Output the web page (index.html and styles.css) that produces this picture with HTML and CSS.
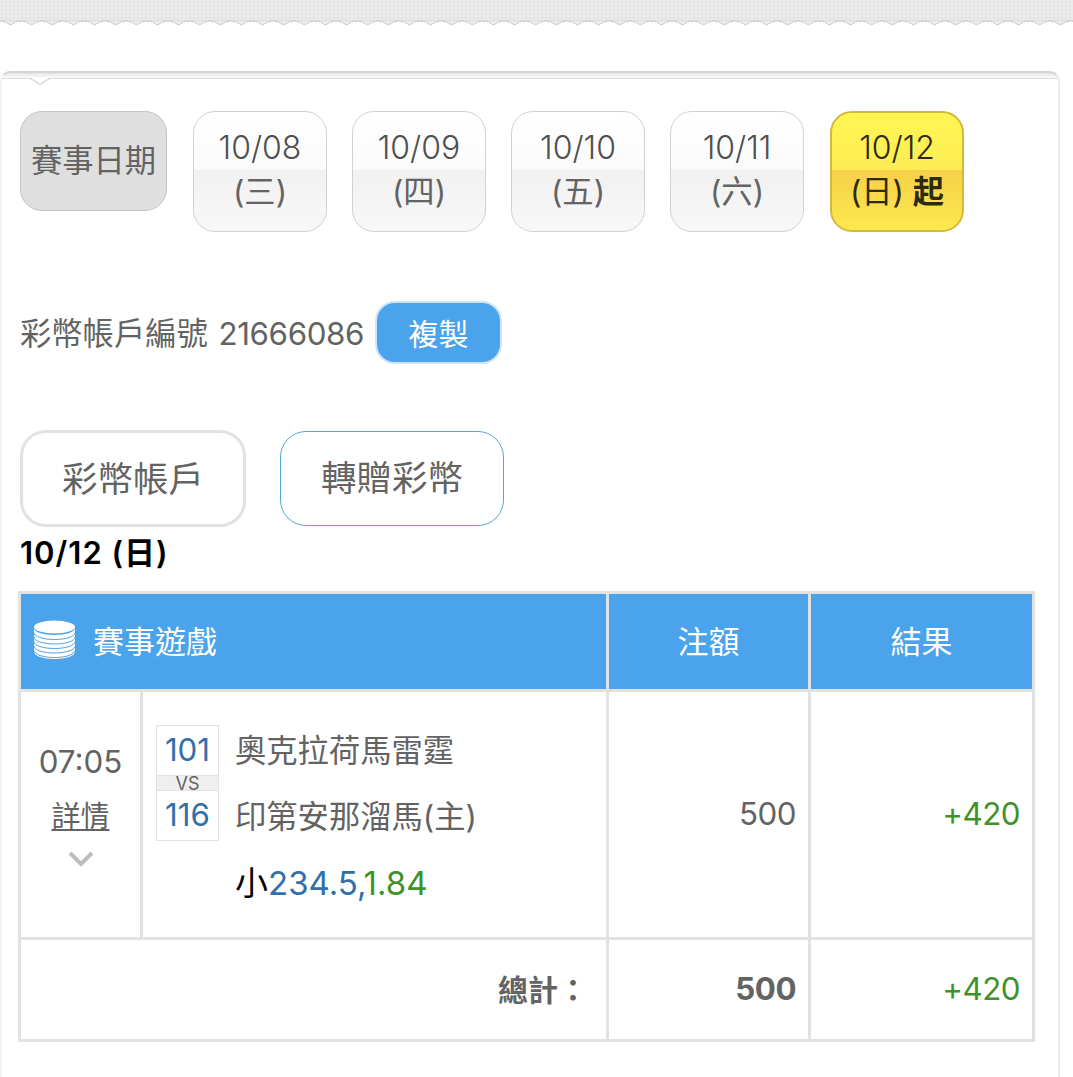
FILE: index.html
```html
<!DOCTYPE html>
<html lang="zh-Hant">
  <head>
    <meta charset="UTF-8" />
    <meta name="viewport" content="width=device-width, initial-scale=1.0" />
    <title>彩幣帳戶</title>
    <link rel="stylesheet" href="styles.css">
  </head>
  <body>
    <div class="top-band">
      <svg class="scallop" width="1073" height="8">
        <defs>
          <pattern id="wave" width="21" height="8" patternUnits="userSpaceOnUse">
            <path d="M0 1 Q5 1 10.5 5 Q16 1 21 1 L21 0 L0 0 Z" fill="#ebebeb" stroke="#cdcdcd" stroke-width="1" />
          </pattern>
        </defs>
        <rect width="1073" height="8" fill="url(#wave)" />
      </svg>
    </div>

    <div class="panel">
      <svg class="panel-notch" width="22" height="9" viewBox="0 0 22 9">
        <path d="M1 0L11 6.500L21 0" fill="#ffffff" stroke="#dddddd" stroke-width="1.5" />
      </svg>

      <div class="date-row">
        <div class="date-label">賽事日期</div>
        <div class="date-btn"><span class="date-num">10/08</span><span>(三)</span></div>
        <div class="date-btn"><span class="date-num">10/09</span><span>(四)</span></div>
        <div class="date-btn"><span class="date-num">10/10</span><span>(五)</span></div>
        <div class="date-btn"><span class="date-num">10/11</span><span>(六)</span></div>
        <div class="date-btn active"><span class="date-num">10/12</span><span>(日) <b>起</b></span></div>
      </div>

      <div class="account-row">
        <span class="account-text">彩幣帳戶編號 <span class="account-no">21666086</span></span>
        <button class="copy-btn">複製</button>
      </div>

      <div class="tabs">
        <div class="tab">彩幣帳戶</div>
        <div class="tab tab-blue">轉贈彩幣</div>
      </div>

      <div class="day-title">10/12 (日)</div>

      <table class="bets">
        <colgroup>
          <col class="col-time" />
          <col class="col-game" />
          <col class="col-stake" />
          <col class="col-result" />
        </colgroup>
        <tr class="head">
          <th colspan="2">
            <div class="head-game">
              <svg class="coins" width="41" height="39" viewBox="0 0 41 39">
                <ellipse cx="20.5" cy="7" rx="20.5" ry="6.5" fill="#fff" />
                <path d="M0 8v24c0 4 9 7 20.500 7s20.500-3 20.500-7V8c0 4-9 7-20.500 7S0 12 0 8z" fill="#fff" />
                <g fill="none" stroke="#4ba3ec" stroke-width="1">
                  <path d="M0 12.500c0 4 9 7 20.500 7s20.500-3 20.500-7" />
                  <path d="M0 17c0 4 9 7 20.500 7s20.500-3 20.500-7" />
                  <path d="M0 21.500c0 4 9 7 20.500 7s20.500-3 20.500-7" />
                  <path d="M0 26c0 4 9 7 20.500 7s20.500-3 20.500-7" />
                  <path d="M0 30.500c0 4 9 7 20.500 7s20.500-3 20.500-7" />
                </g>
              </svg>
              賽事遊戲
            </div>
          </th>
          <th>注額</th>
          <th>結果</th>
        </tr>
        <tr class="bet-row">
          <td class="time-cell">
            <div class="time">07:05</div>
            <a class="detail">詳情</a>
            <svg class="chevron" width="26" height="16" viewBox="0 0 26 16">
              <path d="M2 2l11 11L24 2" fill="none" stroke="#bdbdbd" stroke-width="4" />
            </svg>
          </td>
          <td class="game-cell">
            <div class="game">
              <div class="codes">
                <div>101</div>
                <div class="vs">VS</div>
                <div>116</div>
              </div>
              <div class="teams">
                <div>奧克拉荷馬雷霆</div>
                <div>印第安那溜馬(主)</div>
              </div>
            </div>
            <div class="pick">小<span class="blue">234.5,</span><span class="green">1.84</span></div>
          </td>
          <td class="num">500</td>
          <td class="num green">+420</td>
        </tr>
        <tr class="total-row">
          <td colspan="2" class="total-label">總計：</td>
          <td class="num"><b>500</b></td>
          <td class="num green">+420</td>
        </tr>
      </table>
    </div>
  </body>
</html>
```

FILE: styles.css
```css
* {
  box-sizing: border-box;
}

body {
  margin: 0;
  height: 1077px;
  overflow: hidden;
  background-color: #ffffff;
  color: #636363;
  font-family: Inter, "Noto Sans CJK TC", sans-serif;
  font-size: 31.3px;
}

.top-band {
  height: 24px;
  background-color: #ebebeb;
  background-image: radial-gradient(#e0e0e0 1px, transparent 1px);
  background-size: 4px 4px;
  position: relative;
}

.scallop {
  position: absolute;
  left: 0;
  bottom: -4px;
  display: block;
  background-color: #ffffff;
}

.panel {
  position: relative;
  width: 1060px;
  height: 1030px;
  margin-top: 47px;
  padding: 38px 0 0 20px;
  border-top: 2px solid #d4d4d4;
  border-right: 2px solid #e9e9e9;
  border-left: 2px solid #f2f2f2;
  border-radius: 10px 10px 0 0;
  background:
    linear-gradient(#dddddd, #dddddd) 0 5px / 100% 1px no-repeat,
    linear-gradient(#e6e6e6, #fafafa) 0 0 / 100% 5px no-repeat;
}

.panel-notch {
  position: absolute;
  top: 5px;
  left: 27px;
  display: block;
}

.date-row {
  display: flex;
  align-items: flex-start;
  gap: 25px;
  margin-left: -2px;
}

.date-label {
  width: 147px;
  height: 100px;
  margin-right: 1px;
  line-height: 98px;
  text-align: center;
  background-color: #dfdfdf;
  border: 1px solid #c4c4c4;
  border-radius: 22px;
}

.date-btn {
  display: flex;
  flex-direction: column;
  width: 134px;
  height: 121px;
  overflow: hidden;
  border: 1px solid #d2d2d2;
  border-radius: 22px;
  text-align: center;
  background: linear-gradient(#ffffff, #fbfbfb 49%, #f1f1f1 49%, #f8f8f8);
}

.date-btn span {
  height: 45px;
  line-height: 45px;
}

.date-btn .date-num {
  margin-top: 13px;
  color: #4f4f4f;
  font-size: 32px;
  font-weight: 350;
}

.date-btn.active {
  margin-left: 1px;
  color: #2e2a12;
  border: 2px solid #d2b93c;
  background: linear-gradient(#fff652, #fdec55 49%, #f6d148 49%, #fde84f);
}

.date-btn.active .date-num {
  margin-top: 12px;
  color: #2e2a12;
}

.account-row {
  display: flex;
  align-items: center;
  gap: 11px;
  margin-top: 69px;
  margin-left: -2px;
}

.account-text {
  padding-bottom: 3px;
}

.account-no {
  margin-left: 2px;
  letter-spacing: -0.4px;
}

.copy-btn {
  width: 127px;
  height: 63px;
  padding: 0 0 2px;
  border: 2px solid #cfe5f7;
  border-radius: 20px;
  background-color: #4ba3ec;
  color: #ffffff;
  font: inherit;
  font-size: 30px;
}

.tabs {
  display: flex;
  align-items: flex-start;
  gap: 34px;
  margin-top: 66px;
  margin-left: -2px;
}

.tab {
  width: 226px;
  height: 97px;
  line-height: 94px;
  text-align: center;
  font-size: 35.5px;
  border: 3px solid #e2e2e2;
  border-radius: 26px;
}

.tab-blue {
  width: 224px;
  height: 95px;
  margin-top: 1px;
  line-height: 93px;
  border: 1px solid #56a8cf;
}

.day-title {
  margin-left: -2px;
  margin-top: 4px;
  height: 60px;
  line-height: 44px;
  color: #000000;
  font-size: 31px;
  font-weight: 600;
  letter-spacing: 1px;
}

.bets {
  width: 1014px;
  margin-left: -4px;
  table-layout: fixed;
  border-collapse: collapse;
}

.col-time {
  width: 122px;
}

.col-game {
  width: 466px;
}

.col-stake {
  width: 202px;
}

.col-result {
  width: 224px;
}

.bets th,
.bets td {
  border: 3px solid #e2e2e2;
  padding: 0;
  font-weight: 400;
}

.bets .head th {
  height: 98px;
  padding-bottom: 4px;
  background-color: #4ba3ec;
  color: #ffffff;
  font-size: 31px;
}

.head-game {
  display: flex;
  align-items: center;
  gap: 18px;
  padding-left: 13px;
}

.coins {
  display: block;
}

.bet-row td {
  height: 248px;
}

.time-cell {
  text-align: center;
  vertical-align: top;
  padding-top: 47px !important;
}

.time {
  line-height: 46px;
}

.detail {
  display: block;
  margin-top: 9px;
  line-height: 46px;
  font-size: 29px;
  text-decoration: underline;
}

.chevron {
  display: block;
  margin: 11px auto 0;
}

.game-cell {
  vertical-align: top;
  padding: 33px 0 0 13px !important;
}

.game {
  display: flex;
  gap: 16px;
}

.codes {
  width: 63px;
  height: 116px;
  border: 1px solid #e2e2e2;
  text-align: center;
  color: #336fa8;
  line-height: 49px;
}

.codes .vs {
  height: 16px;
  line-height: 16px;
  font-size: 18px;
  color: #636363;
  background-color: #efefef;
  border-top: 1px solid #e2e2e2;
  border-bottom: 1px solid #e2e2e2;
}

.teams div {
  height: 66px;
  line-height: 52px;
}

.pick {
  margin: 1px 0 0 79px;
  line-height: 50px;
  color: #000000;
  font-size: 33px;
}

.blue {
  color: #336fa8;
}

.green,
.bets td.green {
  color: #3f9129;
}

.num {
  text-align: right;
  padding-right: 12px !important;
  padding-bottom: 2px !important;
  letter-spacing: -0.5px;
}

.num b {
  font-weight: 700;
}

.total-row td {
  height: 102px;
}

.total-label {
  text-align: right;
  padding-right: 18px !important;
  padding-bottom: 4px !important;
  font-weight: 700 !important;
  font-size: 30px;
}
```
